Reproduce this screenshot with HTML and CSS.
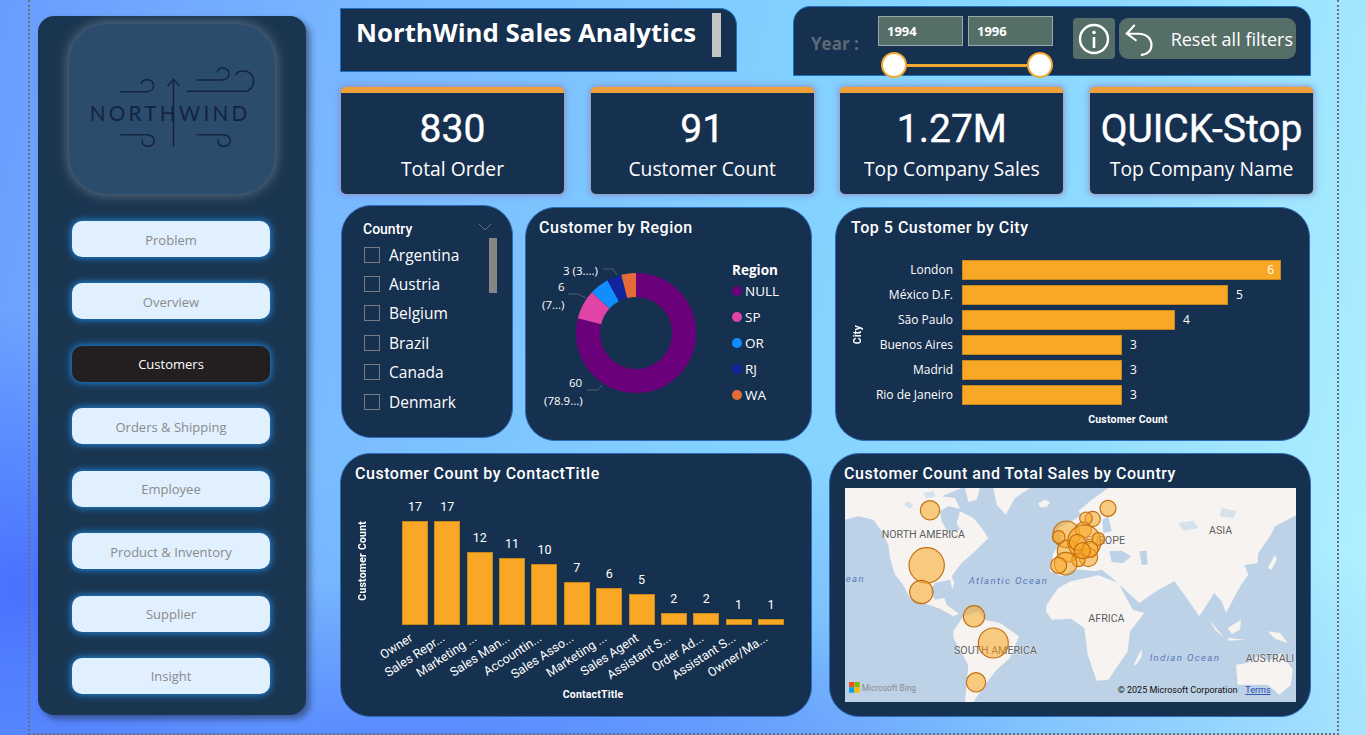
FILE: index.html
```html
<!DOCTYPE html>
<html lang="en">
<head>
<meta charset="utf-8">
<title>NorthWind Sales Analytics</title>
<link rel="stylesheet" href="styles.css">
</head>
<body>
<div class="frame">
  <aside class="sidebar">
    <div class="logo-box">
      <svg class="logo" viewBox="118 72 617 510" aria-label="Northwind logo">
        <g fill="none" stroke="#14233f" stroke-width="4.5">
          <path d="M272 275H350C378 275 378 239 352 239C341 239 335 245 335 252"/>
          <path d="M500 240H575C605 240 605 204 578 204C568 204 562 210 562 217"/>
          <path d="M470 274H640C682 274 682 213 640 213C630 213 620 217 617 225"/>
          <path d="M431 440V240M413 258L431 238L449 258"/>
          <path d="M272 404H350C382 404 380 440 352 439C340 438 335 428 338 418"/>
          <path d="M500 404H578C610 404 608 440 580 439C568 438 562 428 565 418"/>
        </g>
        <text class="logo-text" x="180" y="362" textLength="472">NORTHWIND</text>
      </svg>
    </div>
    <nav class="nav">
      <div class="nav-btn">Problem</div>
      <div class="nav-btn">Overview</div>
      <div class="nav-btn active">Customers</div>
      <div class="nav-btn">Orders &amp; Shipping</div>
      <div class="nav-btn">Employee</div>
      <div class="nav-btn">Product &amp; Inventory</div>
      <div class="nav-btn">Supplier</div>
      <div class="nav-btn">Insight</div>
    </nav>
  </aside>

  <main class="main">
    <section class="row-head">
      <div class="title-box">
        <h1>NorthWind Sales Analytics</h1>
        <span class="title-bar"></span>
      </div>
      <div class="filter-box">
        <span class="year-label">Year :</span>
        <div class="range">
          <div class="range-inputs">
            <span class="range-input">1994</span>
            <span class="range-input">1996</span>
          </div>
          <div class="slider">
            <span class="thumb"></span><span class="track"></span><span class="thumb"></span>
          </div>
        </div>
        <div class="info-btn">
          <svg viewBox="0 0 32 32" width="32" height="32"><circle cx="16" cy="16" r="14" fill="none" stroke="#fff" stroke-width="2.4"/><circle cx="16" cy="9.5" r="1.8" fill="#fff"/><path d="M16 14v11" stroke="#fff" stroke-width="2.6"/></svg>
        </div>
        <div class="reset-btn">
          <svg viewBox="0 0 34 40" width="30" height="36"><path d="M11 4L2 14L13 22M3 14H15C25 14 30 20 30 27C30 33 25 38 18 38" fill="none" stroke="#fff" stroke-width="2.4"/></svg>
          <span>Reset all filters</span>
        </div>
      </div>
    </section>

    <section class="row-kpi">
      <div class="kpi"><div class="kpi-value">830</div><div class="kpi-label">Total Order</div></div>
      <div class="kpi"><div class="kpi-value">91</div><div class="kpi-label">Customer Count</div></div>
      <div class="kpi"><div class="kpi-value">1.27M</div><div class="kpi-label">Top Company Sales</div></div>
      <div class="kpi"><div class="kpi-value">QUICK-Stop</div><div class="kpi-label">Top Company Name</div></div>
    </section>

    <section class="row-mid">
      <div class="card slicer">
        <div class="slicer-head">
          <span>Country</span>
          <svg viewBox="0 0 14 8" width="14" height="8"><path d="M1 1l6 6 6-6" fill="none" stroke="#5f7388" stroke-width="1"/></svg>
        </div>
        <div class="slicer-body">
          <ul class="slicer-list">
            <li><i></i>Argentina</li>
            <li><i></i>Austria</li>
            <li><i></i>Belgium</li>
            <li><i></i>Brazil</li>
            <li><i></i>Canada</li>
            <li><i></i>Denmark</li>
          </ul>
          <span class="scroll"></span>
        </div>
      </div>

      <div class="card donut-card">
        <h2>Customer by Region</h2>
        <div class="donut-wrap">
          <svg class="donut" viewBox="0 0 190 172" width="190" height="172">
            <g transform="rotate(-90 107 81)" fill="none" stroke-width="24">
              <circle cx="107" cy="81" r="48" pathLength="76" stroke="#6b007b" stroke-dasharray="60 16" stroke-dashoffset="0"/>
              <circle cx="107" cy="81" r="48" pathLength="76" stroke="#e044a7" stroke-dasharray="6 70" stroke-dashoffset="-60"/>
              <circle cx="107" cy="81" r="48" pathLength="76" stroke="#118dff" stroke-dasharray="4 72" stroke-dashoffset="-66"/>
              <circle cx="107" cy="81" r="48" pathLength="76" stroke="#12239e" stroke-dasharray="3 73" stroke-dashoffset="-70"/>
              <circle cx="107" cy="81" r="48" pathLength="76" stroke="#e66c37" stroke-dasharray="3 73" stroke-dashoffset="-73"/>
            </g>
            <g fill="none" stroke="#4a5f74" stroke-width="1">
              <path d="M74 17H84L88 23"/><path d="M39 42H49L57 46"/><path d="M58 138H69L73 133"/>
            </g>
            <g class="donut-label">
              <text x="34" y="22.5">3 (3....)</text>
              <text x="29" y="39">6</text>
              <text x="13" y="57">(7...)</text>
              <text x="40" y="135">60</text>
              <text x="15" y="153">(78.9...)</text>
            </g>
          </svg>
          <div class="legend">
            <div class="legend-title">Region</div>
            <div class="legend-item"><i class="c-null"></i>NULL</div>
            <div class="legend-item"><i class="c-sp"></i>SP</div>
            <div class="legend-item"><i class="c-or"></i>OR</div>
            <div class="legend-item"><i class="c-rj"></i>RJ</div>
            <div class="legend-item"><i class="c-wa"></i>WA</div>
          </div>
        </div>
      </div>

      <div class="card city-card">
        <h2>Top 5 Customer by City</h2>
        <div class="city-plot">
          <div class="axis-y city-axis"><span>City</span></div>
          <div class="hbars">
            <div class="hrow"><span class="hname">London</span><div class="hbar" style="width:319px"><b class="inside">6</b></div></div>
            <div class="hrow"><span class="hname">México D.F.</span><div class="hbar" style="width:266px"></div><b>5</b></div>
            <div class="hrow"><span class="hname">São Paulo</span><div class="hbar" style="width:213px"></div><b>4</b></div>
            <div class="hrow"><span class="hname">Buenos Aires</span><div class="hbar" style="width:160px"></div><b>3</b></div>
            <div class="hrow"><span class="hname">Madrid</span><div class="hbar" style="width:160px"></div><b>3</b></div>
            <div class="hrow"><span class="hname">Rio de Janeiro</span><div class="hbar" style="width:160px"></div><b>3</b></div>
          </div>
        </div>
        <div class="axis-x city-x">Customer Count</div>
      </div>
    </section>

    <section class="row-bottom">
      <div class="card contact-card">
        <h2>Customer Count by ContactTitle</h2>
        <div class="contact-plot">
          <div class="axis-y contact-axis"><span>Customer Count</span></div>
          <div class="vbars">
            <div class="vcol"><b>17</b><div class="vbar" style="height:104px"></div><div class="vname"><span>Owner</span></div></div>
            <div class="vcol"><b>17</b><div class="vbar" style="height:104px"></div><div class="vname"><span>Sales Repr...</span></div></div>
            <div class="vcol"><b>12</b><div class="vbar" style="height:73px"></div><div class="vname"><span>Marketing ...</span></div></div>
            <div class="vcol"><b>11</b><div class="vbar" style="height:67px"></div><div class="vname"><span>Sales Man...</span></div></div>
            <div class="vcol"><b>10</b><div class="vbar" style="height:61px"></div><div class="vname"><span>Accountin...</span></div></div>
            <div class="vcol"><b>7</b><div class="vbar" style="height:43px"></div><div class="vname"><span>Sales Asso...</span></div></div>
            <div class="vcol"><b>6</b><div class="vbar" style="height:37px"></div><div class="vname"><span>Marketing ...</span></div></div>
            <div class="vcol"><b>5</b><div class="vbar" style="height:31px"></div><div class="vname"><span>Sales Agent</span></div></div>
            <div class="vcol"><b>2</b><div class="vbar" style="height:12px"></div><div class="vname"><span>Assistant S...</span></div></div>
            <div class="vcol"><b>2</b><div class="vbar" style="height:12px"></div><div class="vname"><span>Order Ad...</span></div></div>
            <div class="vcol"><b>1</b><div class="vbar" style="height:6px"></div><div class="vname"><span>Assistant S...</span></div></div>
            <div class="vcol"><b>1</b><div class="vbar" style="height:6px"></div><div class="vname"><span>Owner/Ma...</span></div></div>
          </div>
        </div>
        <div class="axis-x contact-x">ContactTitle</div>
      </div>

      <div class="card map-card">
        <h2>Customer Count and Total Sales by Country</h2>
        <svg class="map" viewBox="60 114 1353 642" width="451" height="214">
          <defs><filter id="soft"><feGaussianBlur stdDeviation="1.4"/></filter></defs>
          <rect x="60" y="114" width="1353" height="642" fill="#bdd2e6"/>
          <g transform="translate(60 114)" filter="url(#soft)">
            <g fill="#f6f3f0">
              <path d="M0 0V95L40 85L85 95L110 130L130 170L135 210L150 260L175 292L195 330L250 350L285 362L325 385L342 377L305 350L298 330L270 335L255 310L270 285L315 275L322 303L328 285L320 265L350 225L390 190L430 150L410 120L385 90L345 70L335 105L345 125L310 135L290 100L285 70L310 55L345 62L330 30L290 25L350 0Z"/>
              <path d="M360 0H405L395 35L370 42Z"/>
              <path d="M445 0H555L510 30L482 80L455 50Z"/>
              <path d="M580 45L600 35L615 42L605 58L585 58Z"/>
              <path d="M325 430L355 385L400 370L420 395L465 405L522 445L495 510L455 545L420 590L385 642H360L365 590L370 530L325 450Z"/>
              <path d="M605 350L640 300L678 280L760 262L820 285L863 365L898 375L855 430L848 490L790 575L755 578L728 500L718 420L678 392L620 395L603 370Z"/>
              <path d="M866 530L890 482L890 505L873 532Z"/>
              <path d="M615 250L625 195L650 160L640 120L680 100L710 80L700 70L740 35L790 0H1356V80L1290 115L1278 140L1240 195L1238 225L1198 232L1210 260L1188 290L1143 375L1130 340L1108 315L1063 385L1018 320L988 280L933 310L883 345L818 285L795 265L770 245L745 250L715 245L680 245L650 265Z"/>
              <path d="M1268 240L1290 200L1295 215L1280 245Z"/>
              <path d="M1093 395L1138 450L1110 425Z"/>
              <path d="M1148 420L1188 395L1185 425L1160 438Z"/>
              <path d="M1148 450L1200 455L1150 458Z"/>
              <path d="M1268 430L1305 435L1328 465L1290 452Z"/>
              <path d="M1173 530L1208 525L1243 500L1258 515L1278 515L1308 495L1343 545L1338 590L1303 620L1268 590L1208 590L1178 590Z"/>
            </g>
            <g fill="#bdd2e6">
              <path d="M793 190L830 188L858 205L835 225L800 222Z"/>
              <path d="M883 190L905 188L908 230L890 230Z"/>
              <path d="M772 95L790 85L800 130L775 135Z"/>
              <path d="M300 75L325 70L335 95L310 110Z"/>
            </g>
            <g fill="#d5e1ec">
              <path d="M185 40L205 48L195 62L178 52Z"/>
              <path d="M235 15L265 10L272 25L245 32Z"/>
              <path d="M1000 105L1045 98L1060 120L1015 128Z"/>
              <path d="M1130 60L1175 70L1165 90L1125 85Z"/>
            </g>
          </g>
          <g class="map-label">
            <text x="170" y="263">NORTH AMERICA</text>
            <text x="781" y="281">EUROPE</text>
            <text x="1152" y="251">ASIA</text>
            <text x="790" y="515">AFRICA</text>
            <text x="387" y="612">SOUTH AMERICA</text>
            <text x="1262" y="637">AUSTRALI</text>
          </g>
          <g class="map-ocean">
            <text x="62" y="396">ean</text>
            <text x="431" y="401">Atlantic Ocean</text>
            <text x="974" y="634">Indian Ocean</text>
          </g>
          <g class="bubbles">
            <circle cx="315" cy="181" r="29"/><circle cx="305" cy="346" r="53"/><circle cx="289" cy="426" r="35"/>
            <circle cx="447" cy="499" r="32"/><circle cx="505" cy="579" r="45"/><circle cx="453" cy="697" r="29"/>
            <circle cx="849" cy="175" r="24"/><circle cx="803" cy="207" r="23"/><circle cx="783" cy="205" r="19"/>
            <circle cx="724" cy="253" r="40"/><circle cx="775" cy="240" r="24"/><circle cx="730" cy="303" r="33"/>
            <circle cx="778" cy="275" r="50"/>
            <circle cx="790" cy="322" r="28"/><circle cx="760" cy="330" r="20"/><circle cx="722" cy="341" r="34"/>
            <circle cx="701" cy="346" r="24"/><circle cx="701" cy="261" r="19"/><circle cx="820" cy="267" r="19"/>
            <circle cx="757" cy="277" r="24"/><circle cx="795" cy="298" r="24"/><circle cx="772" cy="302" r="24"/>
          </g>
          <rect x="72" y="696" width="16" height="16" fill="#f25022"/>
          <rect x="88" y="696" width="16" height="16" fill="#7fba00"/>
          <rect x="72" y="712" width="16" height="16" fill="#00a4ef"/>
          <rect x="88" y="712" width="16" height="16" fill="#ffb900"/>
          <text class="map-bing" x="110" y="722">Microsoft Bing</text>
          <text class="map-copy" x="878" y="729">© 2025 Microsoft Corporation</text>
          <text class="map-terms" x="1261" y="729">Terms</text>
        </svg>
      </div>
    </section>
  </main>
</div>
</body>
</html>
```

FILE: styles.css
```css
* { box-sizing: border-box; margin: 0; padding: 0; }
html, body { height: 100%; overflow: hidden; }
body {
  width: 1366px;
  height: 735px;
  font-family: "Open Sans", "Noto Sans", sans-serif;
  background:
    radial-gradient(ellipse 300px 280px at 20px 590px, rgba(70,110,255,.95) 0%, rgba(70,110,255,.45) 55%, rgba(70,110,255,0) 100%),
    radial-gradient(ellipse 620px 180px at 420px 760px, rgba(80,125,255,.85) 0%, rgba(80,125,255,0) 100%),
    radial-gradient(ellipse 950px 320px at 640px 770px, rgba(105,160,252,.75) 0%, rgba(105,160,252,0) 100%),
    linear-gradient(104deg, #6a9cff 0%, #78b8ff 24%, #82d0ff 52%, #90dcff 76%, #b4f2ff 100%);
}
.frame {
  width: 1311px;
  height: 735px;
  margin-left: 28px;
  padding: 16px 0 0 9px;
  display: flex;
  border-left: 2px dotted #6a7078;
  border-right: 2px dotted #6a7078;
  border-bottom: 2px dotted #6a7078;
}

/* sidebar */
.sidebar {
  width: 268px;
  height: 699px;
  flex: none;
  background: #1a3550;
  border-radius: 16px;
  box-shadow: 4px 4px 6px rgba(30,40,60,.55);
  padding: 8px 36px 21px 34px;
  display: flex;
  flex-direction: column;
  margin-left: -1px;
}
.logo-box {
  width: 206px;
  height: 170px;
  margin-left: -3px;
  background: #2c4c6e;
  border-radius: 38px;
  box-shadow: 0 0 14px rgba(190,200,210,.5);
  flex: none;
}
.logo { display: block; width: 206px; height: 170px; }
.logo-text {
  font-family: Lato, sans-serif;
  font-size: 62px;
  fill: #14233f;
}
.nav {
  margin-top: 27px;
  flex: 1;
  display: flex;
  flex-direction: column;
  justify-content: space-between;
}
.nav-btn {
  width: 198px;
  height: 36px;
  padding-top: 1px;
  background: #e0f0ff;
  color: #8a8a8a;
  border-radius: 10px;
  box-shadow: 0 0 7px 1px #2186dc;
  font-size: 13px;
  display: flex;
  align-items: center;
  justify-content: center;
}
.nav-btn.active { background: #231f20; color: #fff; }

/* main */
.main {
  margin-left: 34px;
  width: 975px;
  flex: none;
  margin-top: -16px;
}
.row-head {
  height: 87px;
  display: flex;
  align-items: flex-start;
}
.title-box {
  width: 397px;
  height: 64px;
  margin-top: 8px;
  background: #16304f;
  border: 1px solid #1d6fc0;
  border-top-right-radius: 17px;
  display: flex;
  padding: 4px 15px 0 15px;
  justify-content: space-between;
}
.title-box h1 {
  font-size: 25.8px;
  line-height: 38px;
  font-weight: 700;
  color: #fff;
}
.title-bar { width: 9px; height: 44px; background: #c4c4c4; }
.filter-box {
  width: 518px;
  height: 70px;
  margin-top: 6px;
  margin-left: 56px;
  background: #16304f;
  border: 1px solid #1d6fc0;
  border-radius: 17px 17px 0 0;
  display: flex;
  align-items: flex-start;
  padding: 9px 0 0 17px;
}
.year-label {
  margin-top: 16px;
  width: 67px;
  flex: none;
  font-size: 17px;
  font-weight: 700;
  color: #5d6a76;
}
.range { width: 175px; flex: none; }
.range-inputs { display: flex; gap: 5px; }
.range-input {
  width: 85px;
  height: 30px;
  background: #566e68;
  border: 1px solid #9aa8a6;
  color: #fff;
  font-weight: 700;
  font-size: 13px;
  padding: 5px 0 0 8px;
}
.slider { display: flex; align-items: center; margin: 6px 0 0 3px; }
.thumb {
  width: 26px;
  height: 26px;
  flex: none;
  border-radius: 50%;
  background: #fff;
  border: 2px solid #f0a830;
}
.track { flex: 1; max-width: 120px; height: 3px; background: #f0a830; }
.info-btn {
  width: 42px;
  height: 41px;
  margin: 2px 0 0 20px;
  background: #566e68;
  border-radius: 4px;
  display: flex;
  align-items: center;
  justify-content: center;
  flex: none;
}
.reset-btn {
  width: 177px;
  height: 41px;
  margin: 2px 0 0 4px;
  background: #566e68;
  border-radius: 9px;
  display: flex;
  align-items: center;
  padding: 0 3px 0 6px;
  justify-content: space-between;
  color: #fff;
  font-size: 18px;
  flex: none;
}

/* kpi */
.row-kpi {
  height: 118px;
  padding-left: 1px;
  display: flex;
  gap: 26.7px;
  align-items: flex-start;
}
.kpi {
  width: 223px;
  height: 107px;
  background: #16304f;
  border-top: 6px solid #f0a13c;
  border-radius: 5px;
  box-shadow: 0 0 6px 2px rgba(120,130,220,.55), 0 0 2px 1px rgba(240,160,90,.5);
  text-align: center;
  color: #fff;
}
.kpi-value {
  font-family: Roboto, sans-serif;
  font-size: 39px;
  line-height: 46px;
  margin-top: 13px;
  font-weight: 400;
  -webkit-text-stroke: .4px #fff;
}
.kpi-label { font-size: 19.3px; line-height: 28px; margin-top: 3px; white-space: nowrap; }

/* cards */
.card {
  background: #16304f;
  border: 1px solid #2f69b8;
  border-radius: 30px;
  color: #fff;
  flex: none;
}
.card h2 {
  font-family: Roboto, sans-serif;
  font-size: 16px;
  font-weight: 500;
  letter-spacing: .52px;
  line-height: 20px;
  white-space: nowrap;
}
.row-mid { height: 248px; display: flex; align-items: flex-start; padding-left: 1px; }
.slicer { width: 172px; height: 233px; padding: 15px 15px 0 22px; }
.slicer-head {
  display: flex;
  justify-content: space-between;
  align-items: flex-start;
  font-family: Roboto, sans-serif;
  font-size: 14px;
  font-weight: 500;
  line-height: 17px;
  padding-right: 5px;
  margin-left: -1px;
}
.slicer-head svg { margin-top: 2px; }
.slicer-body { display: flex; justify-content: space-between; }
.slicer-list { list-style: none; margin-top: 2px; }
.slicer-list li {
  display: flex;
  align-items: center;
  gap: 9px;
  height: 29.4px;
  font-size: 15.5px;
}
.slicer-list i { width: 16px; height: 16px; border: 1px solid #7b7b7b; flex: none; }
.scroll { width: 8px; height: 55px; background: #868686; margin-top: 0; }
.donut-card {
  width: 287px;
  height: 234px;
  margin: 2px 0 0 12px;
  padding: 10px 0 0 13px;
}
.donut-wrap { display: flex; margin-top: 14px; margin-left: -10px; }
.donut { flex: none; }
.donut-label text { font-size: 11.5px; fill: #fff; font-family: "Open Sans", sans-serif; }
.legend { margin: 10px 0 0 13px; }
.legend-title { font-size: 13.5px; font-weight: 700; line-height: 16px; }
.legend-item {
  display: flex;
  align-items: center;
  gap: 3px;
  height: 26px;
  font-size: 13.5px;
}
.legend-item i { width: 10px; height: 10px; border-radius: 50%; flex: none; }
.c-null { background: #6b007b; }
.c-sp { background: #e044a7; }
.c-or { background: #118dff; }
.c-rj { background: #12239e; }
.c-wa { background: #e66c37; }

.city-card {
  width: 475px;
  height: 234px;
  margin: 2px 0 0 23px;
  padding: 10px 0 0 15px;
}
.city-plot { display: flex; margin-top: 22px; }
.axis-y { display: flex; align-items: center; justify-content: center; }
.axis-y span {
  writing-mode: vertical-rl;
  transform: rotate(180deg);
  font-family: Roboto, sans-serif;
  font-size: 10.5px;
  letter-spacing: .2px;
  font-weight: 700;
  white-space: nowrap;
}
.city-axis { width: 12px; height: 150px; }
.hbars { display: flex; flex-direction: column; gap: 5.5px; margin-left: -1px; }
.hrow { display: flex; align-items: center; height: 19.5px; font-size: 12px; }
.hname { width: 91px; text-align: right; margin-right: 9px; white-space: nowrap; }
.hrow b { font-weight: 400; margin-left: 8px; font-size: 12px; }
.hbar { height: 19.5px; background: #f9a825; border: 1px solid #c9871f; display: flex; justify-content: flex-end; align-items: center; }
.hbar b.inside { margin: 0 6px 0 0; }
.axis-x { font-family: Roboto, sans-serif; font-size: 10.5px; letter-spacing: .2px; font-weight: 700; text-align: center; }
.city-x { margin: 3px 0 0 237px; width: 80px; white-space: nowrap; }

.row-bottom { display: flex; align-items: flex-start; gap: 17px; }
.contact-card { width: 472px; height: 264px; padding: 10px 0 0 14px; }
.contact-plot { display: flex; margin-top: 5px; }
.contact-axis { width: 12px; height: 144px; margin-left: 1px; }
.vbars { display: flex; margin-left: 34px; gap: 6.36px; height: 141px; }
.vcol {
  width: 26px;
  height: 132px;
  display: flex;
  flex-direction: column;
  justify-content: flex-end;
  align-items: center;
  font-family: Roboto, sans-serif;
  font-size: 12.5px;
  margin-top: 9px;
}
.vcol b { font-weight: 400; line-height: 17px; margin-bottom: 6px; }
.vbar { width: 26px; background: #f9a825; border: 1px solid #c9871f; flex: none; }
.vname {
  width: 0;
  height: 0;
  display: flex;
  justify-content: flex-end;
  white-space: nowrap;
  font-size: 12.5px;
  line-height: 16px;
  margin-left: -17px;
  margin-top: 5px;
  transform: rotate(-33deg);
  transform-origin: 0 0;
}
.vname span { display: block; }
.contact-x { width: 80px; margin: 55px 0 0 198px; white-space: nowrap; }

.map-card { width: 482px; height: 264px; padding: 10px 0 0 14px; }
.map { display: block; margin: 4px 0 0 1px; }
.map-label text { font-family: Roboto, sans-serif; font-size: 32px; fill: #5d5d60; stroke: rgba(255,255,255,.5); stroke-width: 3px; paint-order: stroke; }
.map-ocean text { font-family: Roboto, sans-serif; font-size: 29px; font-style: italic; fill: #5a78bc; letter-spacing: 4px; }
.bubbles circle { fill: rgba(249,168,37,.55); stroke: #c26f12; stroke-width: 3.5; }
.map-bing { font-family: Roboto, sans-serif; font-size: 25px; fill: #8a8a8a; }
.map-copy { font-family: Roboto, sans-serif; font-size: 27px; fill: #111; }
.map-terms { font-family: Roboto, sans-serif; font-size: 27px; fill: #2a4ab0; text-decoration: underline; }
```
